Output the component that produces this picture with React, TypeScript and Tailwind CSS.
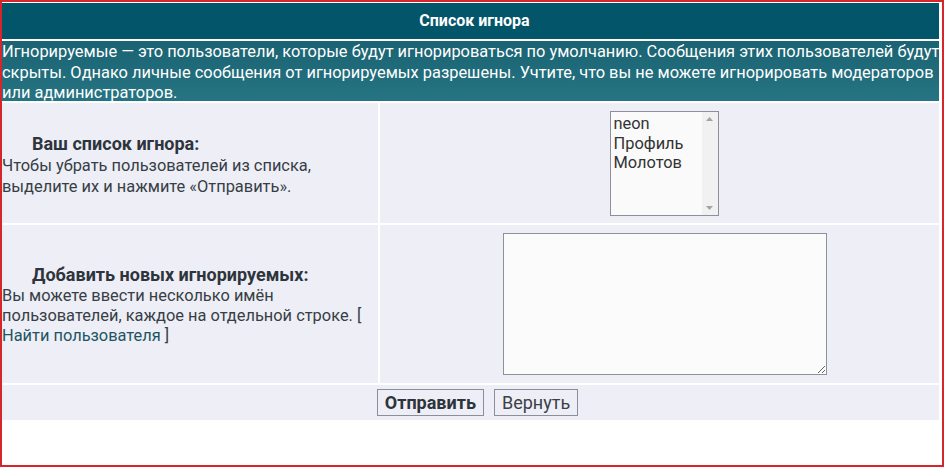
import React from 'react';

const ignored = ['neon', 'Профиль', 'Молотов'];

const ScrollArrow = ({ up }: { up?: boolean }) => (
  <svg width="7" height="4" viewBox="0 0 7 4" className="fill-[#a3a3a3]">
    {up ? <path d="M0 4 L3.5 0 L7 4 Z" /> : <path d="M0 0 L3.5 4 L7 0 Z" />}
  </svg>
);

export default function App() {
  return (
    <div
      className="w-[944px] h-[467px] border-2 border-[#d4262b] bg-white overflow-hidden text-[#373e45]"
      style={{ fontFamily: 'Roboto, "Liberation Sans", Arial, sans-serif' }}
    >
      <div className="w-[937px] pt-px flex flex-col gap-[2px]">
        {/* header */}
        <div className="h-[36px] bg-[#03566a] flex items-center justify-center pl-[8px]">
          <h2 className="text-white text-[16px] font-bold">Список игнора</h2>
        </div>

        {/* description */}
        <div className="h-[60px] bg-gradient-to-b from-[#1a6373] to-[#267483] text-white text-[16.4px] leading-[20.5px] whitespace-nowrap pt-px">
          <p>Игнорируемые — это пользователи, которые будут игнорироваться по умолчанию. Сообщения этих пользователей будут</p>
          <p>скрыты. Однако личные сообщения от игнорируемых разрешены. Учтите, что вы не можете игнорировать модераторов</p>
          <p>или администраторов.</p>
        </div>

        {/* current list */}
        <div className="h-[120px] flex gap-[2px]">
          <div className="w-[376px] bg-[#edeef6] flex flex-col justify-center pt-[4px]">
            <p className="pl-[30px] font-bold text-[18px] leading-[22px] text-[#2d343c]">Ваш список игнора:</p>
            <p className="text-[16.4px] leading-[21px]">
              Чтобы убрать пользователей из списка,
              <br />
              выделите их и нажмите «Отправить».
            </p>
          </div>
          <div className="flex-1 bg-[#edeef6] flex justify-center pt-[8px] pl-[9px]">
            <div className="w-[109px] h-[105px] border border-[#8d9099] bg-[#fafafa] flex">
              <ul className="flex-1 pl-[3px] pt-[2px] text-[16.4px] leading-[19.5px] text-[#333]">
                {ignored.map((name) => (
                  <li key={name}>{name}</li>
                ))}
              </ul>
              <div className="w-[16px] bg-[#f1f1f1] flex flex-col items-center justify-between py-[5px]">
                <ScrollArrow up />
                <ScrollArrow />
              </div>
            </div>
          </div>
        </div>

        {/* add new */}
        <div className="h-[158px] flex gap-[2px]">
          <div className="w-[376px] bg-[#edeef6] flex flex-col justify-center pt-[2px]">
            <p className="pl-[30px] font-bold text-[18px] leading-[22px] text-[#2d343c]">Добавить новых игнорируемых:</p>
            <p className="text-[16.4px] leading-[20px]">
              Вы можете ввести несколько имён
              <br />
              пользователей, каждое на отдельной строке. [
              <br />
              <a href="#" className="text-[#1d5562]">Найти пользователя</a> ]
            </p>
          </div>
          <div className="flex-1 bg-[#edeef6] flex justify-center pt-[8px] pl-[10px]">
            <textarea className="w-[324px] h-[142px] border border-[#8f9196] bg-[#fbfbfb] outline-none" />
          </div>
        </div>

        {/* buttons */}
        <div className="h-[35px] bg-[#edeef6] flex items-center justify-center gap-[10px] pl-[14px]">
          <button className="h-[27px] px-[7px] border border-[#8b8f9b] bg-[#edeef6] text-[18px] leading-[25px] font-bold text-[#2d343c]">
            Отправить
          </button>
          <button className="h-[27px] px-[7px] border border-[#8b8f9b] bg-[#edeef6] text-[18px] leading-[25px] text-[#3a4047]">
            Вернуть
          </button>
        </div>
      </div>
    </div>
  );
}
